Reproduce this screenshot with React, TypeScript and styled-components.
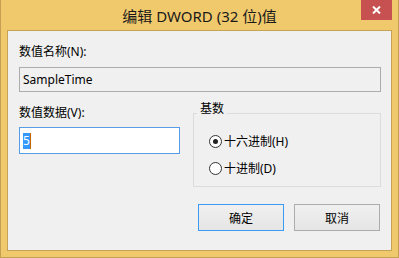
import styled, { createGlobalStyle } from "styled-components";

const GlobalStyle = createGlobalStyle`
  html, body {
    margin: 0;
    padding: 0;
    background: #f0c96c;
  }
  body {
    font-family: "Noto Sans", "Noto Sans CJK SC", sans-serif;
    color: #000;
  }
`;

export default function App() {
  return (
    <>
      <GlobalStyle />
      <Window>
        <TitleBar>
          <span />
          <Title>编辑 DWORD (32 位)值</Title>
          <CloseButton aria-label="关闭">
            <svg width="9" height="8" viewBox="0 0 9 8">
              <path
                d="M1 0.5 L8 7.5 M8 0.5 L1 7.5"
                stroke="#fff"
                strokeWidth="2"
              />
            </svg>
          </CloseButton>
        </TitleBar>
        <Body>
          <Label>数值名称(N):</Label>
          <NameBox>SampleTime</NameBox>
          <MainRow>
            <DataColumn>
              <Label>数值数据(V):</Label>
              <DataBox>
                <Selected>5</Selected>
                <Caret />
              </DataBox>
            </DataColumn>
            <GroupBox>
              <Legend>基数</Legend>
              <RadioRow>
                <Radio $checked />
                十六进制(H)
              </RadioRow>
              <RadioRow>
                <Radio />
                十进制(D)
              </RadioRow>
            </GroupBox>
          </MainRow>
          <ButtonRow>
            <Button $primary>确定</Button>
            <Button>取消</Button>
          </ButtonRow>
        </Body>
      </Window>
    </>
  );
}

const Window = styled.div`
  width: 399px;
  height: 258px;
  box-sizing: border-box;
  border: 1px solid #c49e52;
  border-top: none;
  background: #f0c96c;
  padding: 0 6px 6px 6px;
  display: flex;
  flex-direction: column;
`;

const TitleBar = styled.div`
  height: 30px;
  display: grid;
  grid-template-columns: 1fr auto 1fr;
  align-items: start;
`;

const Title = styled.div`
  font-size: 15px;
  line-height: 20px;
  padding-top: 6px;
  color: #1a1a1a;
  white-space: nowrap;
`;

const CloseButton = styled.button`
  justify-self: end;
  width: 31px;
  height: 20px;
  border: none;
  padding: 0;
  background: #c75050;
  display: flex;
  align-items: center;
  justify-content: center;
`;

const Body = styled.div`
  flex: 1;
  box-sizing: border-box;
  border: 1px solid #c6a255;
  background: #f0f0f0;
  padding: 13px 10px 0 11px;
  display: flex;
  flex-direction: column;
`;

const Label = styled.div`
  font-size: 12px;
  line-height: 16px;
  white-space: nowrap;
`;

const NameBox = styled.div`
  margin-top: 7px;
  height: 25px;
  box-sizing: border-box;
  border: 1px solid #acacac;
  padding: 0 3px;
  display: flex;
  align-items: center;
  font-size: 12px;
`;

const MainRow = styled.div`
  margin-top: 9px;
  display: flex;
  gap: 13px;
  align-items: flex-start;
`;

const DataColumn = styled.div`
  width: 161px;
  padding-top: 4px;
`;

const DataBox = styled.div`
  margin-top: 6px;
  height: 27px;
  box-sizing: border-box;
  border: 1px solid #569de5;
  background: #fff;
  padding-left: 3px;
  display: flex;
  align-items: center;
  font-size: 12px;
`;

const Selected = styled.span`
  background: #3399ff;
  color: #fff;
  line-height: 16px;
  padding: 0 0 0 0;
`;

const Caret = styled.span`
  width: 1px;
  height: 16px;
  background: #c86400;
`;

const GroupBox = styled.div`
  position: relative;
  margin-top: 12px;
  width: 188px;
  height: 74px;
  box-sizing: border-box;
  border: 1px solid #dcdcdc;
  padding: 19px 0 0 15px;
  display: flex;
  flex-direction: column;
  gap: 11px;
`;

const Legend = styled.div`
  position: absolute;
  top: -13px;
  left: 3px;
  padding: 0 3px;
  background: #f0f0f0;
  font-size: 12px;
  line-height: 16px;
`;

const RadioRow = styled.div`
  display: flex;
  align-items: center;
  gap: 2px;
  height: 16px;
  font-size: 12px;
  white-space: nowrap;
`;

const Radio = styled.span<{ $checked?: boolean }>`
  width: 13px;
  height: 13px;
  box-sizing: border-box;
  border-radius: 50%;
  border: 1px solid #333;
  background: #fff;
  display: flex;
  align-items: center;
  justify-content: center;

  &::after {
    content: "";
    width: 5px;
    height: 5px;
    border-radius: 50%;
    background: ${({ $checked }) => ($checked ? "#222" : "transparent")};
  }
`;

const ButtonRow = styled.div`
  margin-top: 17px;
  padding-right: 1px;
  display: flex;
  justify-content: flex-end;
  gap: 10px;
`;

const Button = styled.button<{ $primary?: boolean }>`
  width: 86px;
  height: 27px;
  box-sizing: border-box;
  border: 1px solid ${({ $primary }) => ($primary ? "#3c9af0" : "#acacac")};
  background: linear-gradient(#f0f0f0, #e5e5e5);
  font-family: inherit;
  font-size: 12px;
  color: #000;
  padding: 0;
`;
